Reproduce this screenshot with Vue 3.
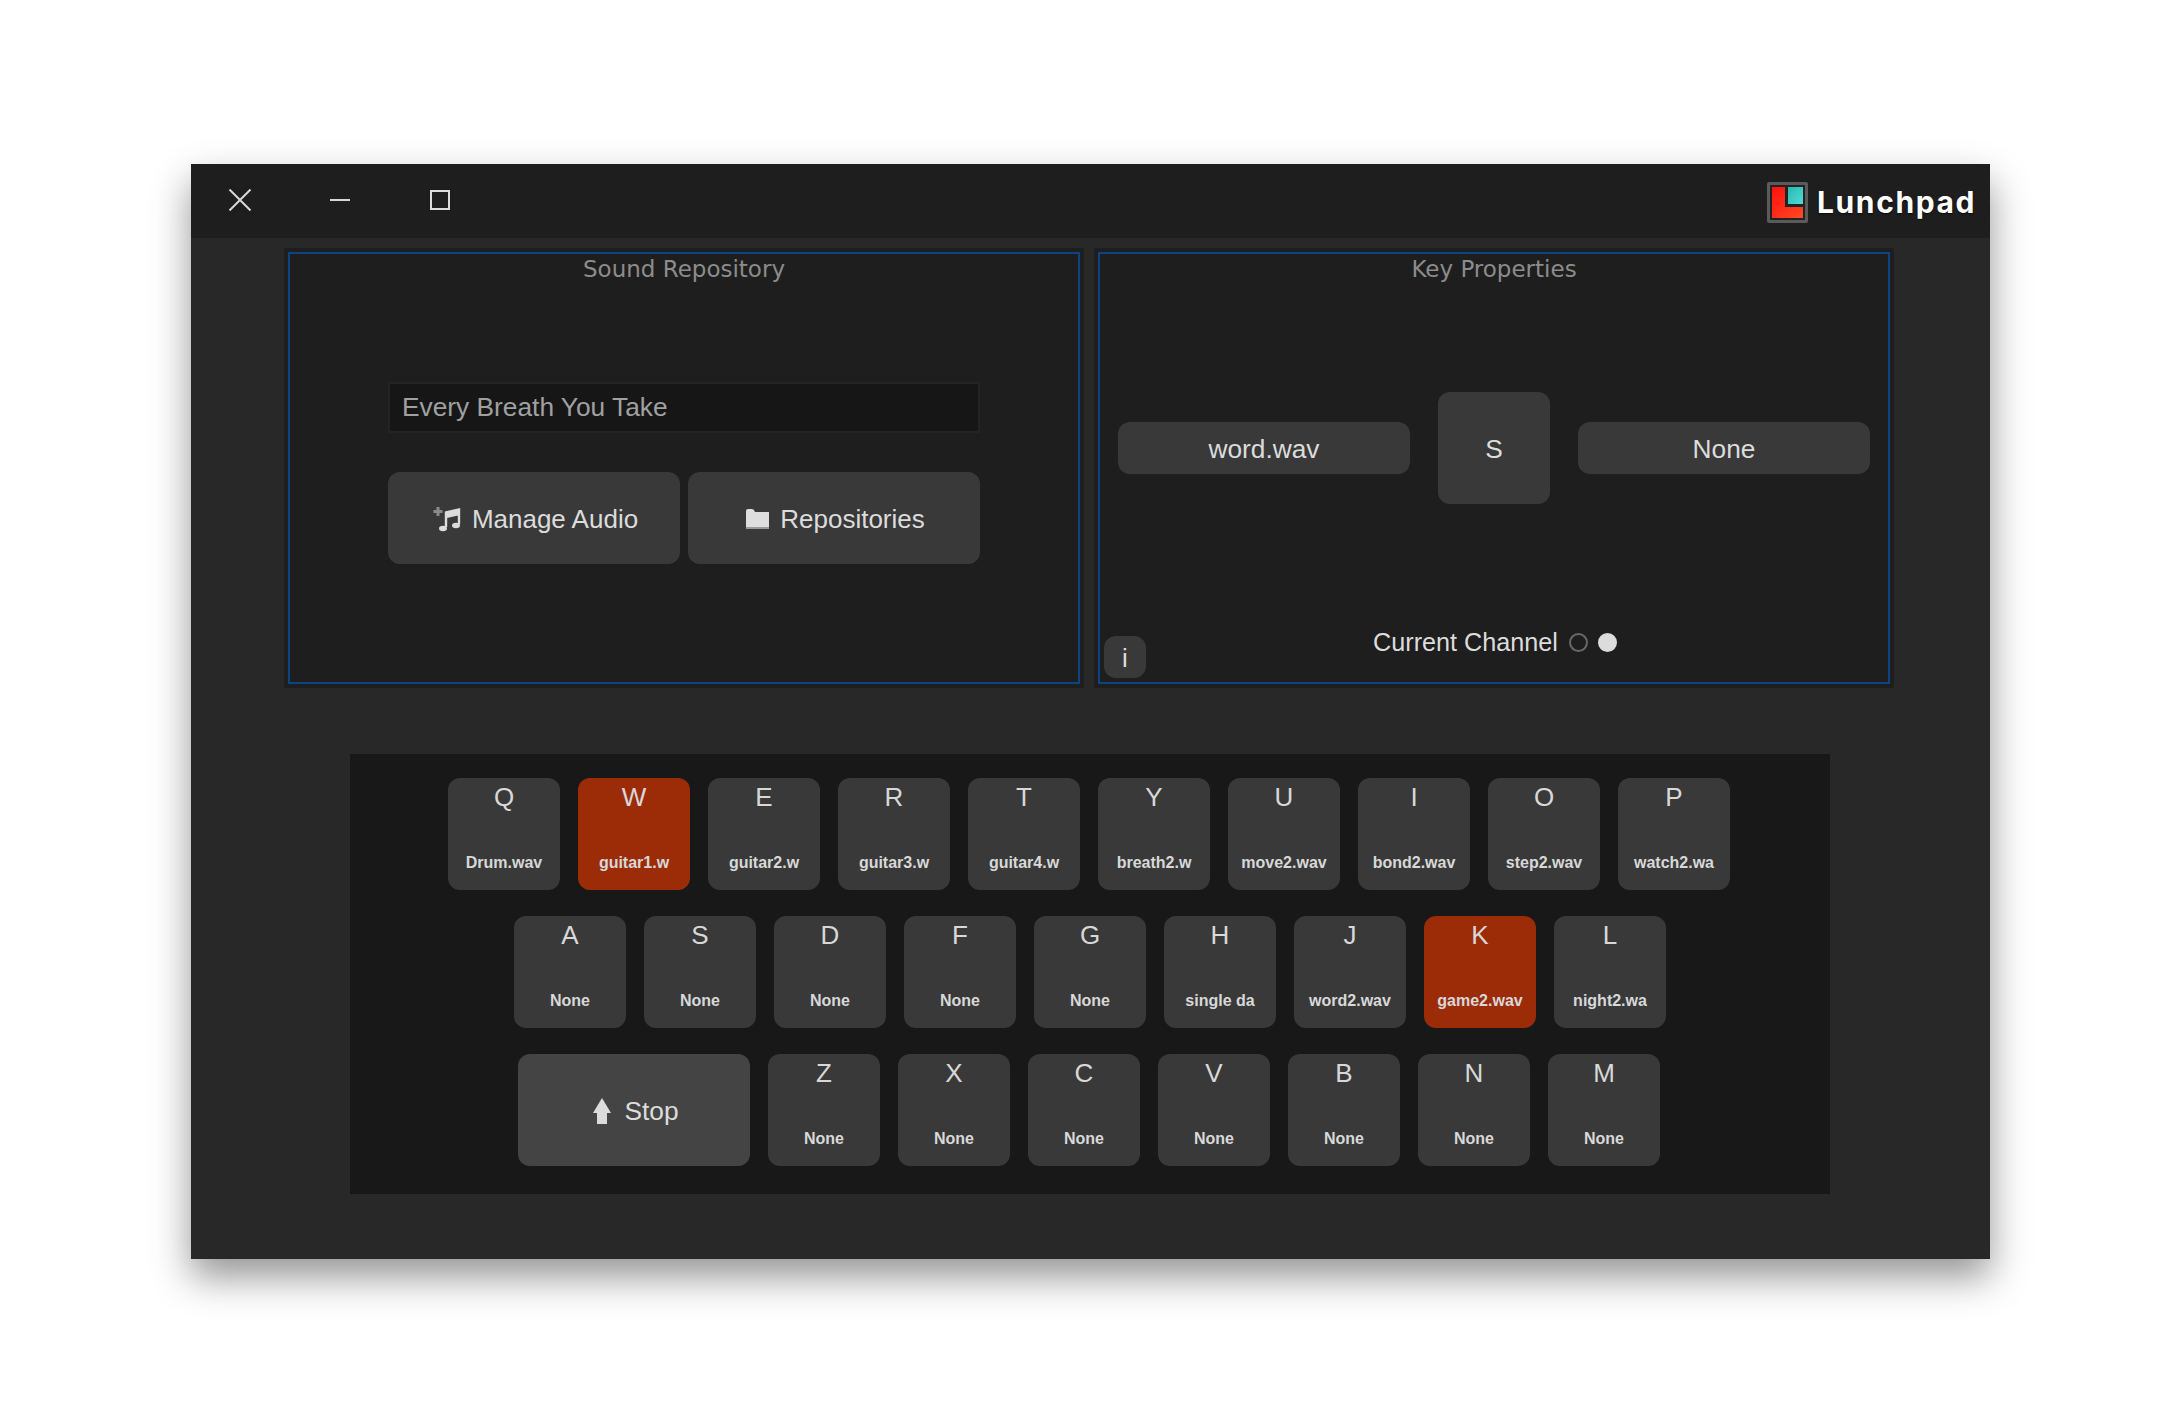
<template>
  <div class="page">
    <div class="window">
      <!-- Title bar -->
      <header class="titlebar">
        <svg class="win-icon close" width="22" height="22" viewBox="0 0 22 22">
          <path d="M0.5 0.5L21.5 21.5M21.5 0.5L0.5 21.5" stroke="#d8d8d8" stroke-width="2" fill="none"/>
        </svg>
        <svg class="win-icon minimize" width="20" height="20" viewBox="0 0 20 20">
          <path d="M0 10H20" stroke="#d8d8d8" stroke-width="2" fill="none"/>
        </svg>
        <svg class="win-icon maximize" width="20" height="20" viewBox="0 0 20 20">
          <rect x="1" y="1" width="18" height="18" stroke="#dcdcdc" stroke-width="2" fill="none"/>
        </svg>
        <div class="brand">
          <svg class="logo" width="41" height="41" viewBox="0 0 41 41">
            <defs>
              <linearGradient id="redFill" x1="0" y1="0" x2="1" y2="1">
                <stop offset="0" stop-color="#ff1010"/>
                <stop offset="1" stop-color="#ff4a22"/>
              </linearGradient>
              <linearGradient id="tealFill" x1="0" y1="0" x2="1" y2="1">
                <stop offset="0" stop-color="#28b8b4"/>
                <stop offset="1" stop-color="#4fdcd4"/>
              </linearGradient>
            </defs>
            <rect x="0" y="0" width="41" height="41" rx="2" fill="#5a5a5a"/>
            <rect x="3" y="3" width="35" height="35" fill="#232323"/>
            <path d="M5 5H18V25H36V36H5Z" fill="url(#redFill)"/>
            <rect x="21" y="5" width="15" height="17" fill="url(#tealFill)"/>
          </svg>
          <span class="brand-name">Lunchpad</span>
        </div>
      </header>

      <div class="content">
        <!-- Top panels -->
        <div class="panels">
          <section class="frame">
            <div class="panel">
              <h2 class="panel-title">Sound Repository</h2>
              <div class="repo-body">
                <div class="repo-name">Every Breath You Take</div>
                <div class="repo-actions">
                  <button class="btn action">
                    <svg width="29" height="25" viewBox="0 0 29 25">
                      <path d="M5 0V9M0.5 4.5H9.5" stroke="#8a8a8a" stroke-width="3" fill="none"/>
                      <path d="M13 7.5V20M26 4V17M13 5.5L26 2.5V7L13 10Z" stroke="#dcdcdc" stroke-width="2.4" fill="#dcdcdc"/>
                      <ellipse cx="10" cy="21.5" rx="4" ry="2.8" fill="#dcdcdc"/>
                      <ellipse cx="23" cy="18.5" rx="4" ry="2.8" fill="#dcdcdc"/>
                    </svg>
                    <span>Manage Audio</span>
                  </button>
                  <button class="btn action repos">
                    <svg width="23" height="20" viewBox="0 0 23 20">
                      <path d="M0 2Q0 0 2 0H6Q8 0 9 3H23V20H0Z" fill="#dedede"/>
                      <rect x="0" y="18" width="23" height="2" fill="#9a9a9a"/>
                    </svg>
                    <span>Repositories</span>
                  </button>
                </div>
              </div>
            </div>
          </section>

          <section class="frame">
            <div class="panel">
              <h2 class="panel-title">Key Properties</h2>
              <div class="props-row">
                <button class="btn prop">word.wav</button>
                <button class="btn prop-key">S</button>
                <button class="btn prop">None</button>
              </div>
              <div class="channel">
                <span>Current Channel</span>
                <span class="radio"></span>
                <span class="radio on"></span>
              </div>
              <button class="btn info">i</button>
            </div>
          </section>
        </div>

        <!-- Keyboard -->
        <div class="keyboard">
          <div class="key-row" v-for="(row, r) in rows" :key="r">
            <button v-if="r === 2" class="btn stop">
              <svg width="18" height="26" viewBox="0 0 18 26">
                <path d="M9 0L18 15H14V26H4V15H0Z" fill="#dcdcdc"/>
              </svg>
              <span>Stop</span>
            </button>
            <div
                v-for="item in row"
                :key="item.letter"
                class="key"
                :class="{ active: item.active }"
            >
              <span class="key-letter">{{ item.letter }}</span>
              <span class="key-label">{{ item.label }}</span>
            </div>
          </div>
        </div>
      </div>
    </div>
  </div>
</template>

<script setup>
const rows = [
  [
    { letter: 'Q', label: 'Drum.wav' },
    { letter: 'W', label: 'guitar1.w', active: true },
    { letter: 'E', label: 'guitar2.w' },
    { letter: 'R', label: 'guitar3.w' },
    { letter: 'T', label: 'guitar4.w' },
    { letter: 'Y', label: 'breath2.w' },
    { letter: 'U', label: 'move2.wav' },
    { letter: 'I', label: 'bond2.wav' },
    { letter: 'O', label: 'step2.wav' },
    { letter: 'P', label: 'watch2.wa' },
  ],
  [
    { letter: 'A', label: 'None' },
    { letter: 'S', label: 'None' },
    { letter: 'D', label: 'None' },
    { letter: 'F', label: 'None' },
    { letter: 'G', label: 'None' },
    { letter: 'H', label: 'single da' },
    { letter: 'J', label: 'word2.wav' },
    { letter: 'K', label: 'game2.wav', active: true },
    { letter: 'L', label: 'night2.wa' },
  ],
  [
    { letter: 'Z', label: 'None' },
    { letter: 'X', label: 'None' },
    { letter: 'C', label: 'None' },
    { letter: 'V', label: 'None' },
    { letter: 'B', label: 'None' },
    { letter: 'N', label: 'None' },
    { letter: 'M', label: 'None' },
  ],
];
</script>

<style>
html, body {
  background: #fff;
}
</style>

<style scoped>
.page {
  padding: 164px 0 0 191px;
  height: 1259px;
  overflow: hidden;
  font-family: "Liberation Sans", Arial, sans-serif;
  color: #dcdcdc;
}

.window {
  width: 1799px;
  height: 1095px;
  background: #282828;
  box-shadow: 0 18px 36px rgba(0, 0, 0, 0.42);
}

.titlebar {
  height: 74px;
  box-sizing: border-box;
  padding-bottom: 2px;
  background: #1e1e1e;
  display: flex;
  align-items: center;
}

.win-icon {
  flex: none;
}

.close {
  margin-left: 38px;
}

.minimize {
  margin-left: 79px;
}

.maximize {
  margin-left: 80px;
}

.brand {
  margin-left: auto;
  margin-right: 14px;
  display: flex;
  align-items: center;
  gap: 9px;
}

.logo {
  display: block;
  margin-top: 5px;
}

.brand-name {
  font-family: Inter, sans-serif;
  font-weight: 700;
  font-size: 30px;
  letter-spacing: 1.6px;
  color: #fff;
  line-height: 40px;
  margin-top: 4px;
  text-shadow: 0 1px 2px rgba(0, 0, 0, 0.7);
}

.content {
  padding-top: 10px;
}

.panels {
  display: flex;
  gap: 10px;
  margin-left: 93px;
}

.frame {
  width: 800px;
  height: 440px;
  padding: 4px;
  box-sizing: border-box;
  background: #1e1e1e;
}

.panel {
  height: 100%;
  box-sizing: border-box;
  border: 2px solid #0d4584;
  display: flex;
  flex-direction: column;
  position: relative;
}

.panel-title {
  margin: 0;
  height: 30px;
  line-height: 30px;
  text-align: center;
  font-family: "DejaVu Sans", sans-serif;
  font-size: 23px;
  font-weight: 400;
  color: #8c8c8c;
}

.btn {
  border: none;
  margin: 0;
  padding: 2px 0 0;
  background: #393939;
  color: #dcdcdc;
  font-family: inherit;
  font-size: 26.3px;
  border-radius: 12px;
  cursor: pointer;
}

.repo-body {
  width: 592px;
  margin: 98px 0 0 98px;
}

.repo-name {
  height: 51px;
  box-sizing: border-box;
  background: #161616;
  border: 2px solid #232323;
  padding-left: 12px;
  line-height: 47px;
  font-size: 26.3px;
  color: #a0a0a0;
}

.repo-actions {
  display: flex;
  gap: 8px;
  margin-top: 39px;
}

.action {
  flex: 1 1 0;
  height: 92px;
  padding-left: 3px;
  font-size: 26px;
  display: flex;
  align-items: center;
  justify-content: center;
  gap: 10px;
}

.repos {
  gap: 11px;
}

.props-row {
  display: flex;
  align-items: center;
  justify-content: center;
  gap: 28px;
  margin-top: 108px;
}

.prop {
  width: 292px;
  height: 52px;
}

.prop-key {
  width: 112px;
  height: 112px;
}

.channel {
  margin-top: auto;
  margin-left: 2px;
  padding-bottom: 25px;
  height: 30px;
  display: flex;
  align-items: center;
  justify-content: center;
  font-size: 25.2px;
  line-height: 30px;
}

.radio {
  width: 19px;
  height: 19px;
  box-sizing: border-box;
  border: 2px solid #686868;
  border-radius: 50%;
  margin-left: 10px;
}

.channel span:first-child {
  margin-right: 1px;
}

.radio.on {
  background: #dcdcdc;
  border-color: #dcdcdc;
}

.info {
  position: absolute;
  left: 4px;
  bottom: 4px;
  width: 42px;
  height: 42px;
  font-size: 26px;
}

.keyboard {
  width: 1480px;
  height: 440px;
  box-sizing: border-box;
  margin: 66px 0 0 159px;
  padding: 24px 2px 0 0;
  background: #181818;
  display: flex;
  flex-direction: column;
  gap: 26px;
}

.key-row {
  display: flex;
  justify-content: center;
  gap: 18px;
}

.key-row:nth-child(2) {
  margin-left: 2px;
}

.key {
  width: 112px;
  height: 112px;
  box-sizing: border-box;
  padding: 4px 0 15px;
  border-radius: 12px;
  background: #393939;
  display: flex;
  flex-direction: column;
  justify-content: space-between;
  align-items: center;
  color: #d8d8d8;
}

.key.active {
  background: #9c2c08;
}

.key-letter {
  font-size: 26px;
  line-height: 30px;
}

.key-label {
  font-size: 16px;
  font-weight: 700;
  line-height: 24px;
  white-space: nowrap;
}

.stop {
  width: 232px;
  height: 112px;
  padding-left: 4px;
  background: #444;
  display: flex;
  align-items: center;
  justify-content: center;
  gap: 13px;
}
</style>
